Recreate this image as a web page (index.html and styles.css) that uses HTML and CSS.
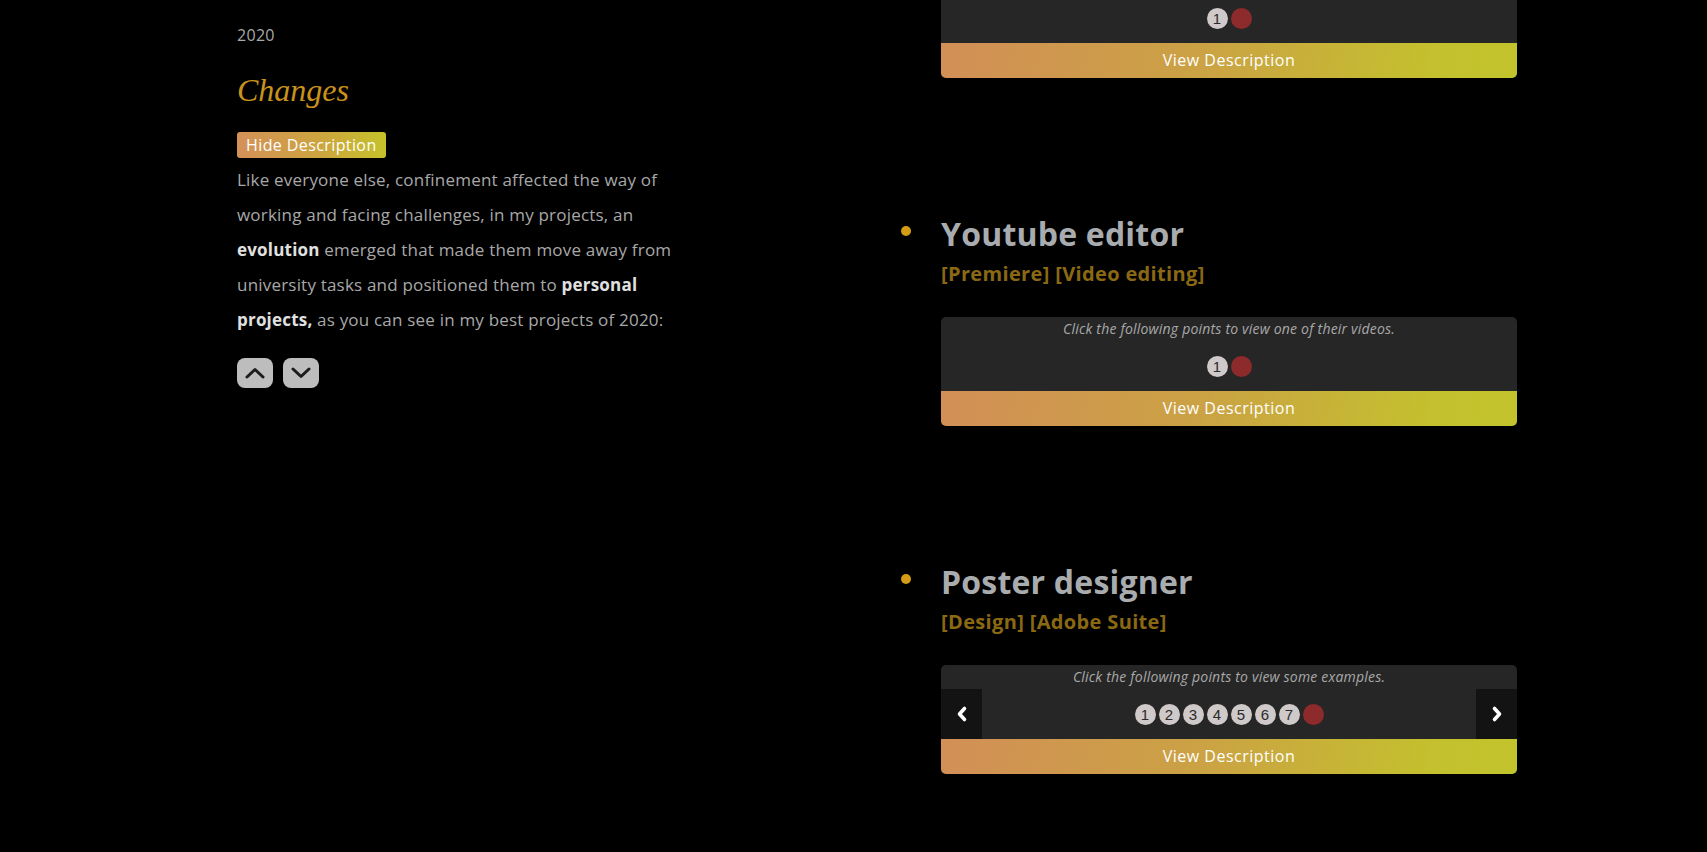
FILE: index.html
```html
<!DOCTYPE html>
<html lang="en">
<head>
<meta charset="utf-8">
<title>2020 - Changes</title>
<link rel="stylesheet" href="styles.css">
</head>
<body>
<div class="page">
  <section class="intro">
    <div class="year">2020</div>
    <h2 class="chapter">Changes</h2>
    <button class="toggle">Hide Description</button>
    <p class="desc">Like everyone else, confinement affected the way of working and facing challenges, in my projects, an <b>evolution</b> emerged that made them move away from university tasks and positioned them to <b>personal projects,</b> as you can see in my best projects of 2020:</p>
    <div class="nav">
      <button class="navbtn" aria-label="Previous year"><svg width="20" height="12" viewBox="0 0 20 12"><polyline points="2,10 10,2.5 18,10" fill="none" stroke="#1c1c1c" stroke-width="3" stroke-linecap="round" stroke-linejoin="round"/></svg></button>
      <button class="navbtn" aria-label="Next year"><svg width="20" height="12" viewBox="0 0 20 12"><polyline points="2,2 10,9.5 18,2" fill="none" stroke="#1c1c1c" stroke-width="3" stroke-linecap="round" stroke-linejoin="round"/></svg></button>
    </div>
  </section>

  <section class="projects">
    <div class="card card-top">
      <div class="hint"></div>
      <div class="dots-row">
        <div class="dots"><span class="dot">1</span><span class="dot active"></span></div>
      </div>
      <div class="bar">View Description</div>
    </div>

    <ul class="list">
      <li class="item">
        <span class="bullet"></span>
        <div class="item-body">
          <h3 class="title">Youtube editor</h3>
          <div class="tags">[Premiere] [Video editing]</div>
          <div class="card">
            <div class="hint">Click the following points to view one of their videos.</div>
            <div class="dots-row">
              <div class="dots"><span class="dot">1</span><span class="dot active"></span></div>
            </div>
            <div class="bar">View Description</div>
          </div>
        </div>
      </li>
      <li class="item">
        <span class="bullet"></span>
        <div class="item-body">
          <h3 class="title">Poster designer</h3>
          <div class="tags">[Design] [Adobe Suite]</div>
          <div class="card">
            <div class="hint">Click the following points to view some examples.</div>
            <div class="dots-row">
              <button class="arrow" aria-label="Previous"><svg width="12" height="18" viewBox="0 0 12 18"><polyline points="8.5,3.5 3.5,9 8.5,14.5" fill="none" stroke="#fff" stroke-width="3.6" stroke-linecap="round" stroke-linejoin="round"/></svg></button>
              <div class="dots">
                <span class="dot">1</span><span class="dot">2</span><span class="dot">3</span><span class="dot">4</span><span class="dot">5</span><span class="dot">6</span><span class="dot">7</span><span class="dot active"></span>
              </div>
              <button class="arrow" aria-label="Next"><svg width="12" height="18" viewBox="0 0 12 18"><polyline points="3.5,3.5 8.5,9 3.5,14.5" fill="none" stroke="#fff" stroke-width="3.6" stroke-linecap="round" stroke-linejoin="round"/></svg></button>
            </div>
            <div class="bar">View Description</div>
          </div>
        </div>
      </li>
    </ul>
  </section>
</div>
</body>
</html>
```

FILE: styles.css
```css
* { box-sizing: border-box; }

html, body {
  margin: 0;
  padding: 0;
  background: #000;
  height: 100%;
  overflow: hidden;
}

body {
  font-family: "Open Sans", "Noto Sans", sans-serif;
  color: #a8a8a8;
}

.page {
  display: grid;
  grid-template-columns: 664px 616px;
  padding-left: 237px;
  align-items: start;
}

/* Left column */
.intro {
  padding-top: 23px;
}

.year {
  font-size: 16px;
  line-height: 24px;
  letter-spacing: 0.3px;
  color: #a8a8a8;
}

.chapter {
  margin: 23px 0 0;
  font-family: "Liberation Serif", "DejaVu Serif", serif;
  font-style: italic;
  font-weight: normal;
  font-size: 32px;
  line-height: 40px;
  color: #c8921c;
}

.toggle {
  display: block;
  margin-top: 22px;
  height: 26px;
  padding: 0 9px;
  border: 0;
  border-radius: 3px;
  background: linear-gradient(90deg, #d49159 0%, #cda43f 55%, #c5c22b 100%);
  color: #fff;
  font-family: "Open Sans", "Noto Sans", sans-serif;
  font-size: 16px;
  letter-spacing: 0.4px;
  line-height: 26px;
}

.desc {
  margin: 4px 0 0;
  width: 455px;
  font-size: 17px;
  letter-spacing: 0.2px;
  line-height: 35px;
  color: #a8a8a8;
}

.desc b {
  color: #e0e0e0;
  font-weight: 700;
}

.nav {
  display: flex;
  gap: 10px;
  margin-top: 21px;
}

.navbtn {
  width: 36px;
  height: 30px;
  padding: 0;
  border: 0;
  border-radius: 8px;
  background: #bdbdbd;
  display: flex;
  align-items: center;
  justify-content: center;
}

/* Right column */
.projects {
  margin-top: -31px;
  padding-left: 40px;
}

.list {
  list-style: none;
  margin: 0;
  padding: 0;
}

.item {
  display: flex;
  margin-left: -40px;
  margin-top: 136px;
}

.item + .item {
  margin-top: 136px;
}

.bullet {
  flex: none;
  width: 10px;
  height: 10px;
  margin: 12px 30px 0 0;
  border-radius: 50%;
  background: #d49c14;
}

.item-body {
  width: 576px;
}

.title {
  margin: 0;
  font-size: 32px;
  line-height: 40px;
  font-weight: 700;
  letter-spacing: 0.2px;
  color: #a9acaf;
}

.tags {
  font-size: 20px;
  line-height: 40px;
  font-weight: 700;
  letter-spacing: 0.35px;
  color: #8b6913;
}

.card {
  width: 576px;
  margin-top: 23px;
  background: #262626;
  border-radius: 5px;
}

.card-top {
  margin-top: 0;
}

.hint {
  height: 24px;
  font-size: 14px;
  line-height: 24px;
  letter-spacing: 0.2px;
  font-style: italic;
  text-align: center;
  color: #a9a9a9;
}

.dots-row {
  height: 50px;
  display: flex;
  align-items: center;
  justify-content: center;
}

.dots {
  flex: 1;
  display: flex;
  justify-content: center;
  gap: 3px;
}

.dot {
  width: 21px;
  height: 21px;
  border-radius: 50%;
  background: #cfc9c9;
  color: #2a2a2a;
  font-family: "Liberation Sans", Arial, sans-serif;
  font-size: 15px;
  line-height: 21px;
  text-align: center;
}

.dot.active {
  background: #8c2a2c;
}

.arrow {
  flex: none;
  width: 41px;
  height: 50px;
  padding: 0;
  border: 0;
  background: #131313;
  display: flex;
  align-items: center;
  justify-content: center;
}

.bar {
  height: 35px;
  border-radius: 0 0 5px 5px;
  background: linear-gradient(100deg, #d28f57 0%, #cba244 45%, #c4c02e 85%, #c2c42c 100%);
  color: #fff;
  font-size: 16px;
  letter-spacing: 0.5px;
  line-height: 35px;
  text-align: center;
}
```
